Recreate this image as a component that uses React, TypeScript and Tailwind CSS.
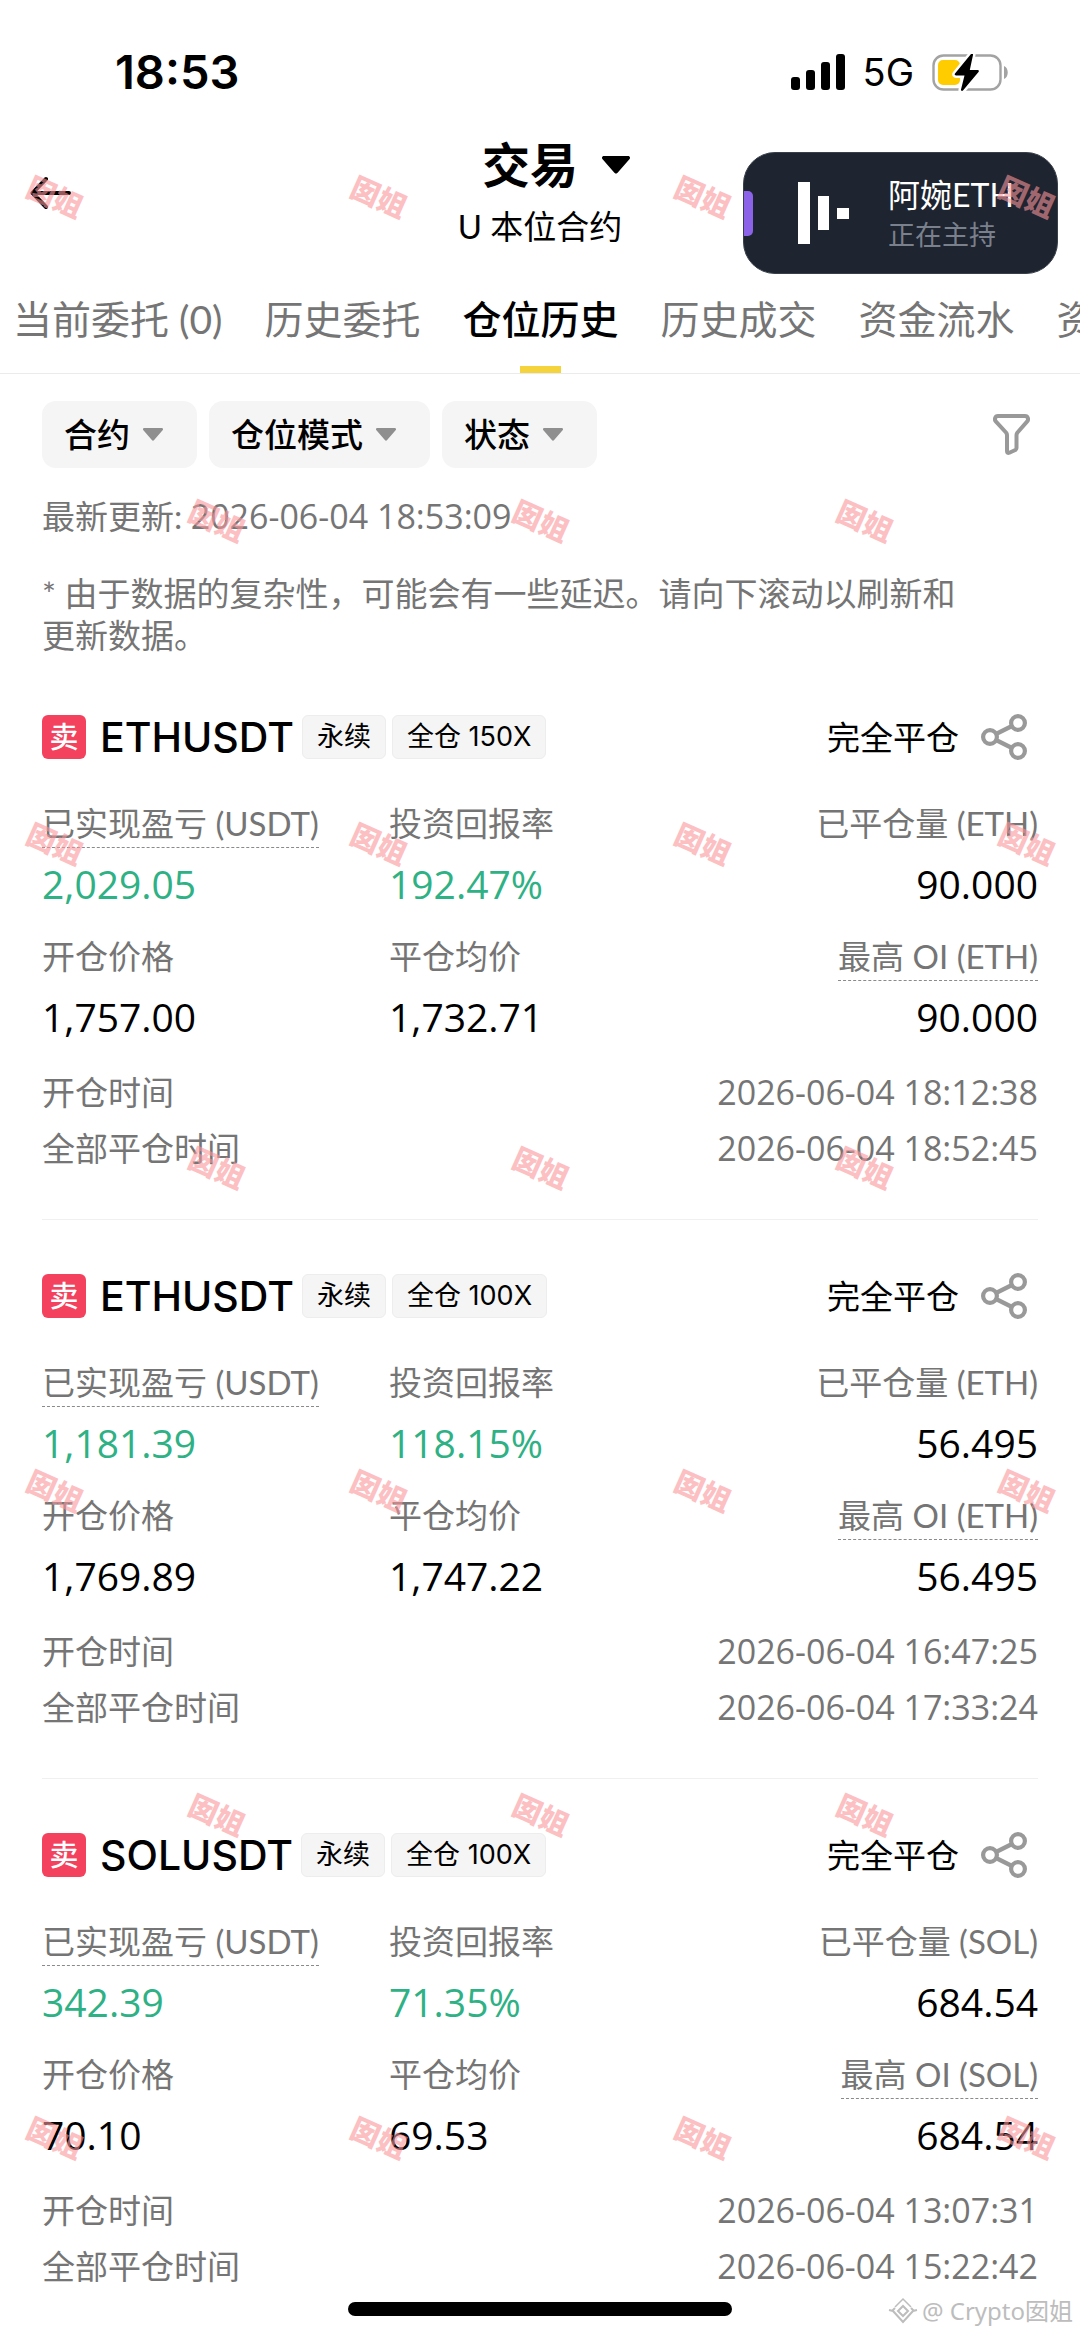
import clsx from "clsx";

interface Position {
    symbol: string;
    coin: string;
    leverage: string;
    pnl: string;
    roi: string;
    closed: string;
    entry: string;
    exit: string;
    maxOi: string;
    openedAt: string;
    closedAt: string;
}

const positions: Position[] = [
    {
        symbol: "ETHUSDT",
        coin: "ETH",
        leverage: "150X",
        pnl: "2,029.05",
        roi: "192.47%",
        closed: "90.000",
        entry: "1,757.00",
        exit: "1,732.71",
        maxOi: "90.000",
        openedAt: "2026-06-04 18:12:38",
        closedAt: "2026-06-04 18:52:45",
    },
    {
        symbol: "ETHUSDT",
        coin: "ETH",
        leverage: "100X",
        pnl: "1,181.39",
        roi: "118.15%",
        closed: "56.495",
        entry: "1,769.89",
        exit: "1,747.22",
        maxOi: "56.495",
        openedAt: "2026-06-04 16:47:25",
        closedAt: "2026-06-04 17:33:24",
    },
    {
        symbol: "SOLUSDT",
        coin: "SOL",
        leverage: "100X",
        pnl: "342.39",
        roi: "71.35%",
        closed: "684.54",
        entry: "70.10",
        exit: "69.53",
        maxOi: "684.54",
        openedAt: "2026-06-04 13:07:31",
        closedAt: "2026-06-04 15:22:42",
    },
];

const tabs = ["当前委托 (0)", "历史委托", "仓位历史", "历史成交", "资金流水", "资金费用"];
const filters = ["合约", "仓位模式", "状态"];

const Caret = ({ className }: { className: string }) => (
    <svg viewBox="0 0 28 18" className={className} fill="currentColor" aria-hidden="true">
        <path d="M2 0h24c2 0 2.6 1.8 1.4 3.2L15.6 16.8c-.9 1.1-2.3 1.1-3.2 0L.6 3.2C-.6 1.8 0 0 2 0z" />
    </svg>
);

const StatusBar = () => (
    <div className="flex h-[130px] items-start justify-between pl-[115px] pr-[71px] pt-12">
        <span className="font-['Inter',sans-serif] text-[47px] font-semibold leading-[48px]">18:53</span>
        <div className="flex h-12 items-center">
            <svg viewBox="0 0 54 36" className="h-9 w-[54px]" aria-label="信号">
                <rect x="0" y="23" width="9" height="13" rx="3" />
                <rect x="15" y="16" width="9" height="20" rx="3" />
                <rect x="30" y="8" width="9" height="28" rx="3" />
                <rect x="45" y="0" width="9" height="36" rx="3" />
            </svg>
            <span className="ml-[18px] font-['Inter',sans-serif] text-[38px] leading-[48px]">5G</span>
            <svg viewBox="0 0 77 37" className="ml-[18px] h-[37px] w-[77px]" aria-label="电量">
                <rect x="1.5" y="1.5" width="67" height="34" rx="10" fill="none" stroke="#a3a3a3" strokeWidth="2.4" />
                <path d="M72 12c5 2 5 11 0 13z" fill="#a3a3a3" />
                <rect x="6" y="6" width="22" height="25" rx="5" fill="#ffcc00" />
                <path
                    d="M39 0 23 19.500c-.8 1 0 1.900 1 1.900h8.500L29 35.500c-.3 1.500 1.200 2 2.200.8L46.500 18c.8-1 .2-2-.9-2h-7.800L41 1c.3-1.500-1-2-2-1z"
                    stroke="#ffffff"
                    strokeWidth="5"
                    paintOrder="stroke"
                />
            </svg>
        </div>
    </div>
);

const LiveCard = () => (
    <aside className="absolute right-[22px] top-[152px] flex h-[122px] w-[315px] items-center overflow-hidden rounded-[32px] border border-[#3a404a] bg-[#1e2430]">
        <span className="h-[45px] w-[9px] rounded-r-[5px] bg-[#8b62e8]" />
        <svg viewBox="0 0 52 62" className="ml-[45px] h-[62px] w-[52px]" fill="#ffffff" aria-hidden="true">
            <rect x="0" y="0" width="12" height="62" />
            <rect x="20" y="14" width="11" height="34" />
            <rect x="39" y="26" width="12" height="11" />
        </svg>
        <div className="ml-[38px] whitespace-nowrap pt-1">
            <p className="text-[32px] leading-10 text-white">阿婉ETH</p>
            <p className="text-[27px] leading-10 text-[#7a808c]">正在主持</p>
        </div>
    </aside>
);

const Header = () => (
    <header className="relative flex h-[122px] flex-col items-center">
        <button type="button" aria-label="返回" className="absolute left-[30px] top-[46px]">
            <svg
                viewBox="0 0 42 34"
                className="h-[34px] w-[42px]"
                fill="none"
                stroke="#000000"
                strokeWidth="4"
                strokeLinecap="round"
                strokeLinejoin="round"
            >
                <path d="M39 17H3M16 3 2.500 17 16 31" />
            </svg>
        </button>
        <button type="button" className="flex items-center gap-6 pl-8 text-5xl font-bold leading-[70px]">
            交易
            <Caret className="h-[18px] w-7" />
        </button>
        <p className="text-[33px] leading-[52px]">U 本位合约</p>
    </header>
);

const Tabs = () => (
    <nav className="overflow-hidden border-b border-[#ebebeb]">
        <ul className="flex gap-[42px] whitespace-nowrap pl-[13px] text-[39px]">
            {tabs.map((tab, index) => (
                <li key={tab} className="flex shrink-0 flex-col items-center pt-[42px]">
                    <a
                        href="#"
                        className={clsx("leading-[50px]", index === 2 ? "font-medium text-black" : "text-[#757575]")}
                    >
                        {tab}
                    </a>
                    <span className={clsx("mt-[22px] h-[7px] w-[41px]", index === 2 && "bg-[#f5d33d]")} />
                </li>
            ))}
        </ul>
    </nav>
);

const Filters = () => (
    <div className="flex items-center gap-3 pl-[42px] pr-[50px] pt-[27px]">
        {filters.map((filter) => (
            <div key={filter} className="relative flex items-center">
                <select
                    aria-label={filter}
                    className="h-[67px] appearance-none rounded-[14px] bg-[#f5f5f5] pl-[22px] pr-[67px] text-[33px] font-medium text-black"
                >
                    <option>{filter}</option>
                </select>
                <Caret className="pointer-events-none absolute right-[34px] h-[13px] w-5 text-[#8f8f8f]" />
            </div>
        ))}
        <button type="button" aria-label="筛选" className="ml-auto">
            <svg
                viewBox="0 0 37 41"
                className="h-[41px] w-[37px]"
                fill="none"
                stroke="#999999"
                strokeWidth="4"
                strokeLinejoin="round"
            >
                <path d="M5 2h27c3 0 4 3.500 2 5.700L24.500 18.500c-.8 1-1 1.500-1 2.500V34c0 1-.3 1.600-1.200 2l-6 2.700c-1.300.5-2.300 0-2.300-1.400V21c0-1-.2-1.500-1-2.500L3 7.700C1 5.500 2 2 5 2z" />
            </svg>
        </button>
    </div>
);

const ShareIcon = () => (
    <svg viewBox="0 0 46 46" className="h-[46px] w-[46px]" fill="none" stroke="#999999" strokeWidth="4.200">
        <path d="m15 20 16-8M15 26l16 8" />
        <circle cx="9" cy="23" r="6.900" />
        <circle cx="37" cy="9" r="6.900" />
        <circle cx="37" cy="37" r="6.900" />
    </svg>
);

const Tag = ({ children }: { children: string }) => (
    <span className="rounded-md border border-[#ededed] bg-[#f5f5f5] px-[14px] font-['Inter','Noto_Sans_CJK_SC',sans-serif] text-[27px] leading-[42px]">
        {children}
    </span>
);

interface FieldProps {
    label: string;
    value: string;
    hint?: boolean;
    gain?: boolean;
    end?: boolean;
}

const Field = ({ label, value, hint, gain, end }: FieldProps) => (
    <div className={clsx("flex flex-col", end ? "items-end" : "items-start")}>
        <dt
            className={clsx(
                "border-b border-dashed text-[33px] leading-[48px] text-[#757575]",
                hint ? "border-[#8a8a8a]" : "border-transparent",
            )}
        >
            {label}
        </dt>
        <dd
            className={clsx(
                "mt-3 font-['Open_Sans',sans-serif] text-[39px] leading-[48px]",
                gain ? "text-[#2eb184]" : "text-black",
            )}
        >
            {value}
        </dd>
    </div>
);

const PositionCard = ({ position }: { position: Position }) => (
    <article className="mx-[42px] border-b border-[#f0f0f0] pb-[43px] pt-[53px]">
        <div className="flex h-[46px] items-center gap-[6px]">
            <span className="flex size-11 items-center justify-center rounded-md bg-[#f4415e] text-[29px] font-medium text-white">
                卖
            </span>
            <h2 className="ml-2 mr-0.5 font-['Inter',sans-serif] text-[41px] font-medium leading-[46px]">
                {position.symbol}
            </h2>
            <Tag>永续</Tag>
            <Tag>{`全仓 ${position.leverage}`}</Tag>
            <span className="ml-auto text-[33px] leading-[46px]">完全平仓</span>
            <button type="button" aria-label="分享" className="ml-4 mr-[11px]">
                <ShareIcon />
            </button>
        </div>
        <dl className="mt-[39px] grid grid-cols-[347fr_324fr_325fr] gap-y-6">
            <Field label="已实现盈亏 (USDT)" value={position.pnl} hint gain />
            <Field label="投资回报率" value={position.roi} gain />
            <Field label={`已平仓量 (${position.coin})`} value={position.closed} end />
            <Field label="开仓价格" value={position.entry} />
            <Field label="平仓均价" value={position.exit} />
            <Field label={`最高 OI (${position.coin})`} value={position.maxOi} hint end />
        </dl>
        <dl className="mt-[23px] text-[33px] leading-[56px] text-[#757575]">
            <div className="flex justify-between">
                <dt>开仓时间</dt>
                <dd className="font-['Open_Sans',sans-serif] text-[34px]">{position.openedAt}</dd>
            </div>
            <div className="flex justify-between">
                <dt>全部平仓时间</dt>
                <dd className="font-['Open_Sans',sans-serif] text-[34px]">{position.closedAt}</dd>
            </div>
        </dl>
    </article>
);

// Staggered stamps: even rows hold four, odd rows hold three shifted by half a step.
const stamps = Array.from({ length: 7 }, (_, row) =>
    Array.from({ length: row % 2 ? 3 : 4 }, (_, col) => ({
        left: `${5.1 + 30 * col + (row % 2 ? 15 : 0)}%`,
        top: Math.round(197 + 323.5 * row),
    })),
).flat();

const Stamps = () => (
    <div className="pointer-events-none absolute inset-0 overflow-hidden" aria-hidden="true">
        {stamps.map((stamp) => (
            <span
                key={`${stamp.left}-${stamp.top}`}
                style={stamp}
                className="absolute -translate-x-1/2 -translate-y-1/2 rotate-[24deg] whitespace-nowrap text-[29px] font-black leading-8 text-[#fa969b]/60"
            >
                囡姐
            </span>
        ))}
    </div>
);

const Signature = () => (
    <div className="absolute bottom-[9px] right-[7px] flex items-center gap-1 text-[#bdbdbd]">
        <svg viewBox="0 0 30 30" className="size-[30px]" fill="none" stroke="currentColor" strokeWidth="2">
            <path d="m7 11 8-8 8 8" strokeWidth="1.500" />
            <path d="m15 10 5 5-5 5-5-5z" />
            <path d="m1 14 4 1 10 11 10-11 4-1M7 12l-3 3M23 12l3 3" />
        </svg>
        <span className="font-['Noto_Sans','Noto_Sans_CJK_SC',sans-serif] text-2xl leading-9">@ Crypto囡姐</span>
    </div>
);

export default function App() {
    return (
        <div className="relative overflow-hidden bg-white font-['Lato','Noto_Sans_CJK_SC',sans-serif] text-black">
            <StatusBar />
            <Header />
            <Tabs />
            <main>
                <Filters />
                <div className="px-[42px] pb-[5px] text-[33px] text-[#757575]">
                    <p className="mt-[27px] leading-[42px]">
                        最新更新: <span className="font-['Open_Sans',sans-serif] text-[34px]">2026-06-04 18:53:09</span>
                    </p>
                    <p className="mt-[35px] pr-[60px] leading-[42px]">
                        * 由于数据的复杂性，可能会有一些延迟。请向下滚动以刷新和更新数据。
                    </p>
                </div>
                {positions.map((position) => (
                    <PositionCard key={position.openedAt} position={position} />
                ))}
            </main>
            <LiveCard />
            <Stamps />
            <div className="absolute bottom-[22px] left-1/2 h-[14px] w-[384px] -translate-x-1/2 rounded-full bg-black" />
            <Signature />
        </div>
    );
}
